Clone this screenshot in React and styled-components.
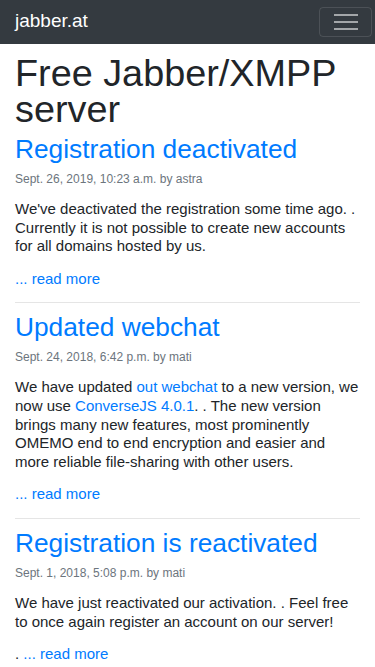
import React from 'react';
import styled, { createGlobalStyle } from 'styled-components';

const posts = [
  {
    title: 'Registration deactivated',
    meta: 'Sept. 26, 2019, 10:23 a.m. by astra',
    body: [
      "We've deactivated the registration some time ago. . Currently it is not possible to create new accounts for all domains hosted by us.",
    ],
  },
  {
    title: 'Updated webchat',
    meta: 'Sept. 24, 2018, 6:42 p.m. by mati',
    body: [
      'We have updated ',
      { link: 'out webchat' },
      ' to a new version, we now use ',
      { link: 'ConverseJS 4.0.1' },
      '. . The new version brings many new features, most prominently OMEMO end to end encryption and easier and more reliable file-sharing with other users.',
    ],
  },
  {
    title: 'Registration is reactivated',
    meta: 'Sept. 1, 2018, 5:08 p.m. by mati',
    body: [
      'We have just reactivated our activation. . Feel free to once again register an account on our server!',
    ],
    lead: '. ',
  },
];

const App = () => (
  <>
    <GlobalStyle />
    <Navbar>
      <Brand href='#'>jabber.at</Brand>
      <Toggler aria-label='Toggle navigation'>
        <span />
        <span />
        <span />
      </Toggler>
    </Navbar>
    <Main>
      <Title>Free Jabber/XMPP server</Title>
      {posts.map((p, i) => (
        <Post key={p.title} last={i === posts.length - 1}>
          <PostTitle href='#'>{p.title}</PostTitle>
          <Meta>{p.meta}</Meta>
          <Body>
            {p.body.map((part, j) =>
              typeof part === 'string' ? (
                <React.Fragment key={j}>{part}</React.Fragment>
              ) : (
                <Link key={j} href='#'>
                  {part.link}
                </Link>
              )
            )}
          </Body>
          <ReadMore>
            {p.lead}
            <Link href='#'>... read more</Link>
          </ReadMore>
        </Post>
      ))}
    </Main>
  </>
);

const GlobalStyle = createGlobalStyle`
  body {
    margin: 0;
    background: #fff;
    color: #212529;
    font-family: "Liberation Sans", Arial, sans-serif;
  }
`;

const Navbar = styled.nav`
  display: flex;
  align-items: center;
  justify-content: space-between;
  height: 44px;
  padding: 0 3px 0 15px;
  background: #343a40;
`;

const Brand = styled.a`
  padding-bottom: 3px;
  color: #fff;
  font-size: 19px;
  line-height: 24px;
  text-decoration: none;
`;

const Toggler = styled.button`
  display: flex;
  flex-direction: column;
  align-items: center;
  justify-content: center;
  gap: 5px;
  width: 53px;
  height: 30px;
  padding: 0;
  background: transparent;
  border: 1px solid rgba(255, 255, 255, 0.12);
  border-radius: 4px;

  span {
    display: block;
    width: 24px;
    height: 2px;
    background: rgba(255, 255, 255, 0.55);
  }
`;

const Main = styled.main`
  padding: 0 15px;
`;

const Title = styled.h1`
  margin: 11px 0 7px;
  font-size: 37.8px;
  font-weight: 400;
  line-height: 36px;
`;

const Post = styled.article`
  padding: 0 0 14px;
  margin-bottom: 9px;
  border-bottom: ${p => (p.last ? 'none' : '1px solid rgba(0, 0, 0, 0.1)')};
`;

const PostTitle = styled.a`
  display: block;
  color: #007bff;
  font-size: 26.3px;
  line-height: 30px;
  text-decoration: none;
`;

const Meta = styled.div`
  margin-top: 7px;
  color: #6c757d;
  font-size: 12px;
  line-height: 16px;
`;

const Body = styled.p`
  margin: 13px 0 0;
  font-size: 15px;
  line-height: 18.6px;
`;

const ReadMore = styled.p`
  margin: 14px 0 0;
  font-size: 15px;
  line-height: 18.6px;
`;

const Link = styled.a`
  color: #007bff;
  text-decoration: none;
`;

export default App;
